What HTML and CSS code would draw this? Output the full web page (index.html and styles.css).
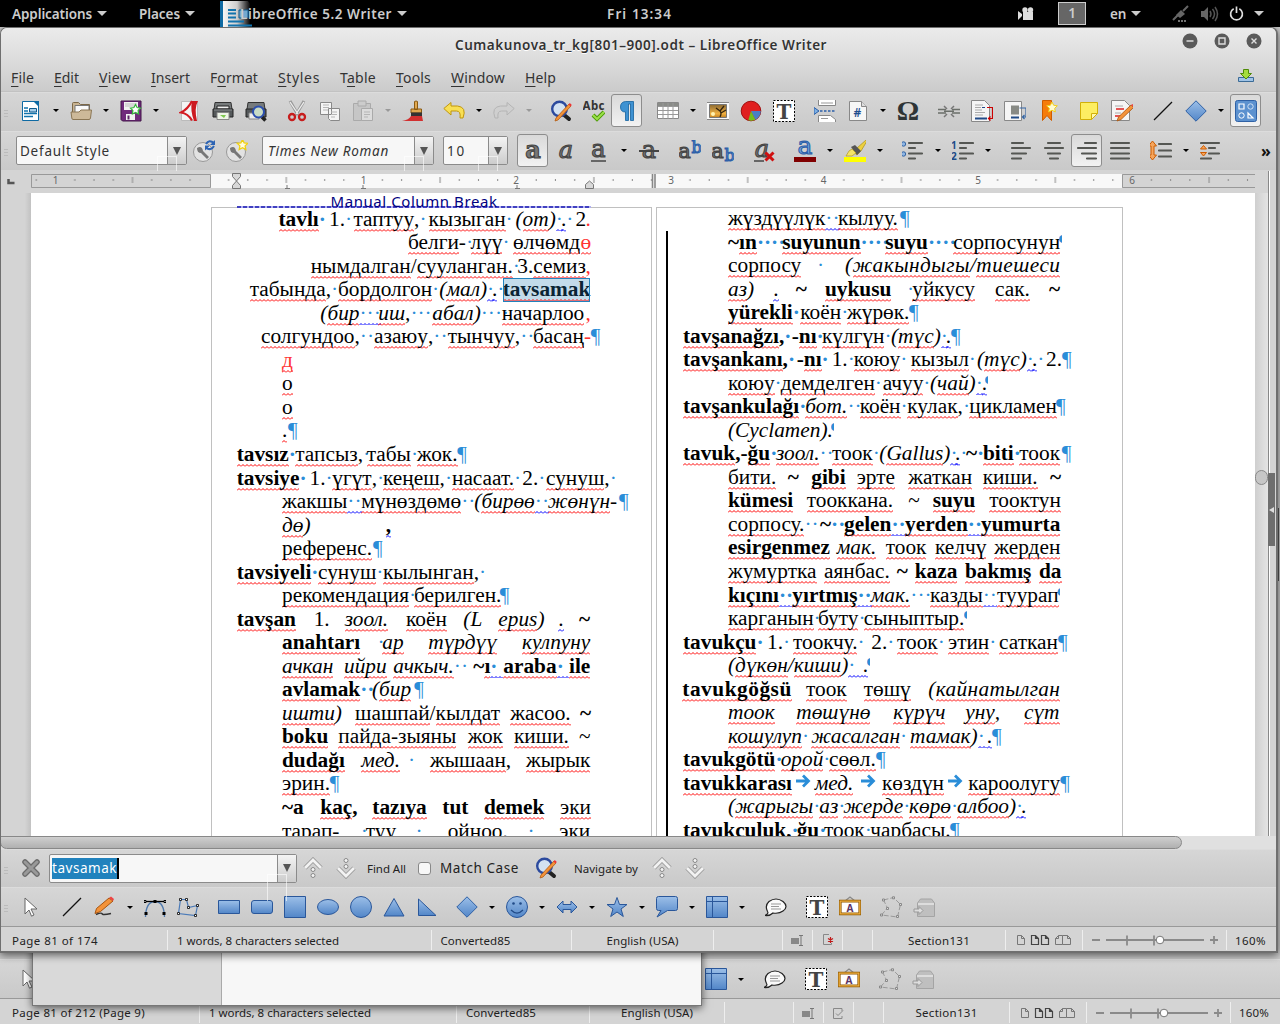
FILE: index.html
```html
<!DOCTYPE html>
<html lang="en">
<head>
<meta charset="utf-8">
<title>Cumakunova_tr_kg[801-900].odt - LibreOffice Writer</title>
<link rel="stylesheet" href="styles.css">
</head>
<body>
<svg class="defs" aria-hidden="true">
<defs>
<linearGradient id="gb" x1="0" y1="0" x2="0" y2="1"><stop offset="0" stop-color="#9cbfe8"/><stop offset="1" stop-color="#5286c8"/></linearGradient>
<linearGradient id="sun" x1="0" y1="0" x2="0" y2="1"><stop offset="0" stop-color="#8a6a34"/><stop offset=".7" stop-color="#f0b040"/><stop offset="1" stop-color="#c08020"/></linearGradient>
<linearGradient id="fade" x1="0" y1="0" x2="1" y2="0"><stop offset="0" stop-color="#fff"/><stop offset=".45" stop-color="#ccc"/><stop offset=".8" stop-color="#000"/></linearGradient>
</defs>
</svg>
<svg class="symbols" aria-hidden="true">
<symbol id="new" viewBox="0 0 22 22"><path d="M2.500 1.500h12l4 4v15h-16z" fill="#fff" stroke="#0f6aa3"/><path d="M13 1h6v6z" fill="#0f6aa3"/><path d="M4 8h4M4 11h4M4 13.500h13M4 16.500h9" stroke="#1173ad" stroke-width="1.500"/><path d="M9.500 8.500h7v3.500h-7z" fill="#a5cce8" stroke="#0f5a8c"/></symbol>
<symbol id="open" viewBox="0 0 22 22"><path d="M2.500 18V3.500q0-1 1-1h5l2 2h9v13z" fill="#c8b391" stroke="#7c6848"/><path d="M5 5.500h14v8H5z" fill="#fafafa" stroke="#777"/><path d="M1 12h8l2-2h10.500l-1 8q-.3 1.500-1.500 1.500H3q-1 0-1.200-1.500z" fill="#cdb999" stroke="#8b7654"/></symbol>
<symbol id="save" viewBox="0 0 22 22"><path d="M1 1h20v20H2.500L1 19.500z" fill="#702a7c" stroke="#421549"/><path d="M4 2h14v8H4zM6 14h9v6H6z" fill="#f2f2f2"/><path d="M5 4h12M5 6h12" stroke="#bbb"/><path d="M7.500 15.500h2v4h-2z" fill="#5a2264"/><path d="m15.500 4.500 1.600 3 3.400.6-2.400 2.400.5 3.500-3.100-1.600-3.100 1.600.5-3.500-2.400-2.400 3.400-.6z" fill="#fff" stroke="#36b83c" stroke-width="1.200"/></symbol>
<symbol id="pdf" viewBox="0 0 22 22"><path d="M2.500 1.500h16v19h-16z" fill="#f4f4f4" stroke="#bbb"/><path d="M13 1Q9 9 2 12.500q7 1 11 8" fill="none" stroke="#d31b22" stroke-width="2.200"/><path d="M13 1h6Q15 8 18 21h-3Q11 10 13 1z" fill="#cc1a20"/></symbol>
<symbol id="print" viewBox="0 0 22 22"><path d="M3 2.500h16l1 7H2z" fill="#777b7c" stroke="#333"/><path d="M5 6h12v3H5z" fill="#eee" stroke="#222"/><path d="M1 9h20v8H1z" fill="#55595b" stroke="#222"/><path d="M2 10h18" stroke="#8a8e90"/><path d="M5 12.500h12v7H5z" fill="#eef4e8" stroke="#888"/><path d="M8 15h6l-2 3z" fill="#7ec850"/></symbol>
<symbol id="preview" viewBox="0 0 22 22"><path d="M3 2.500h16l1 7H2z" fill="#777b7c" stroke="#333"/><path d="M1 9h20v8H1z" fill="#55595b" stroke="#222"/><path d="M4 13h10v6H4z" fill="#eee" stroke="#888"/><path d="m17 17 3.500 3.500" stroke="#222" stroke-width="3.500"/><circle cx="13.500" cy="12" r="5.500" fill="#c9dcc6" stroke="#2c4fae" stroke-width="2"/></symbol>
<symbol id="cut" viewBox="0 0 22 22"><path d="m4 1 8 14M18 1l-8 14" stroke="#999" stroke-width="3"/><path d="m4 2 8 12M18 2l-8 12" stroke="#eee" stroke-width="1.300"/><circle cx="6" cy="17" r="3" fill="none" stroke="#c71d1d" stroke-width="2.300"/><circle cx="16" cy="17" r="3" fill="none" stroke="#c71d1d" stroke-width="2.300"/></symbol>
<symbol id="copy" viewBox="0 0 22 22"><path d="M1.500 2.500h11v12h-11zM9.500 8.500h11v12h-9l-2-2z" fill="#f4f4f4" stroke="#888"/><path d="M4 5h6M4 7.500h6M4 10h5M12 12h6M12 14.500h6M12 17h4" stroke="#b5b5b5"/></symbol>
<symbol id="paste" viewBox="0 0 22 22"><path d="M1.500 3.500h17v17h-17z" fill="#c6c6c6" stroke="#aaa"/><path d="M6 1h8v5H6z" fill="#ccc" stroke="#aaa"/><path d="M9.500 8.500h11v12h-11z" fill="#dcdcdc" stroke="#aaa"/><path d="M12 12h6M12 14.500h6M12 17h4" stroke="#b5b5b5"/></symbol>
<symbol id="brush" viewBox="0 0 22 22"><path d="M12.500 1.500q1.500-1 3 0v8h-3zM9 9h10.500v4H9z" fill="#e0a850" stroke="#8a5a12"/><path d="M9 12.500h11v4H9z" fill="#333"/><path d="M9 16h11l1 5H0q7-1 9-5z" fill="#d23030"/></symbol>
<symbol id="undo" viewBox="0 0 22 22"><path d="M8 2.500.8 8.500 8 15v-4h5.500q4.500 0 3.500 7h3q4-11-5.500-12H8z" fill="#f8df55" stroke="#c0960c"/></symbol>
<symbol id="redo" viewBox="0 0 22 22"><path d="m14 2.500 7.200 6L14 15v-4H8.500Q4 11 5 18H2Q-2 7 7.500 6H14z" fill="#cfcfcf" stroke="#b4b4b4"/></symbol>
<symbol id="find" viewBox="0 0 22 22"><path d="m13 14 6 5" stroke="#222" stroke-width="4" stroke-linecap="round"/><circle cx="9.500" cy="9" r="7.300" fill="#d3e2f2" stroke="#2c4a9e" stroke-width="2.400"/><path d="m19 4 2 2L8 20l-3 1 1-3z" fill="#f3933a" stroke="#b15a12" stroke-width=".8"/><path d="m18.500 4.500 2 2 1.300-1.500-2-2z" fill="#e33"/></symbol>
<symbol id="abc" viewBox="0 0 22 22"><text x="-.5" y="9.500" font-family="Noto Sans" font-weight="700" font-size="11.500" textLength="22" fill="#333">Abc</text><path d="m10 15 4 4 7-7" fill="none" stroke="#4c9a06" stroke-width="4"/><path d="m10 15 4 4 7-7" fill="none" stroke="#9be04a" stroke-width="2"/></symbol>
<symbol id="pil" viewBox="0 0 22 22"><path d="M17.500 1.500H9.500Q4.500 2 4.500 7t5 5v8.500h3V4h2v16.500h3z" fill="#3f92d2" stroke="#15629e" stroke-width=".8"/></symbol>
<symbol id="table" viewBox="0 0 22 22"><path d="M.5 2.500h21v16H.5z" fill="#fff" stroke="#888"/><path d="M1 3h20v3H1z" fill="#8a8c88"/><path d="M1 6.500h20M1 10.500h20M1 14.500h20M6 3v16M11 3v16M16 3v16" stroke="#999"/></symbol>
<symbol id="image" viewBox="0 0 22 22"><path d="M-.5 2.500h23v17h-23z" fill="#fafafa" stroke="#888"/><path d="M2.500 4.500h17v13h-17z" fill="url(#sun)" stroke="#777"/><path d="M13 17q2-4 0-6l-4-3M13 11l4-5M14 13l5-3" stroke="#33230c" stroke-width="1.300" fill="none"/><circle cx="6" cy="14" r="2" fill="#fff2b0"/></symbol>
<symbol id="chart" viewBox="0 0 22 22"><circle cx="11" cy="11" r="9.800" fill="#e02020" stroke="#a00f0f"/><path d="M11 11h9.800a10 10 0 0 1-5.500 8.700z" fill="#4a7fc4"/><path d="m11 11 4.300 8.700a10 10 0 0 1-7 .6z" fill="#73bf1e"/></symbol>
<symbol id="tbox" viewBox="0 0 22 22"><path d="M.5.500h21v21H.5z" fill="#fff" stroke="#000" stroke-dasharray="2 1.500"/><text x="11" y="18.500" text-anchor="middle" font-family="DejaVu Serif" font-weight="700" font-size="20" fill="#444">T</text></symbol>
<symbol id="pbreak" viewBox="0 0 22 22"><path d="M4.500 0v5.500h17V0M4.500 22v-6.500h12l5 4V22" fill="#fff" stroke="#888"/><path d="M7 3h12M7 18.500h7" stroke="#999"/><path d="M6 11h17" stroke="#2b5fa8" stroke-width="1.500" stroke-dasharray="2.500 1.500"/><path d="m0 7.500 5 3.500-5 3.500z" fill="#7eb1e4" stroke="#2b5fa8"/></symbol>
<symbol id="field" viewBox="0 0 22 22"><path d="M2.500 1.500h12l5 5v14h-17z" fill="#f7f7f7" stroke="#888"/><path d="M14.500 1.500v5h5" fill="#ddd" stroke="#888"/><text x="10.500" y="17" text-anchor="middle" font-family="Noto Sans" font-weight="600" font-size="12" fill="#1f4e8f">#</text></symbol>
<symbol id="omega" viewBox="0 0 22 22"><text x="11" y="20" text-anchor="middle" font-family="Liberation Serif" font-weight="700" font-size="28" fill="#2e3436">Ω</text></symbol>
<symbol id="link" viewBox="0 0 22 22"><path d="M0 9.500h8M14 9.500h8M0 13h8M14 13h8M6 11.200h10" stroke="#6b6f6a" stroke-width="1.500" fill="none"/><path d="m6 6 3 3m7-3-3 3m-7 8 3-3m7 3-3-3" stroke="#777" stroke-width="1.500"/></symbol>
<symbol id="footn" viewBox="0 0 22 22"><path d="M.5.500h13l5 5v16H.5z" fill="#f5f5f5" stroke="#888"/><path d="M4 5h8M4 7.500h6M4 10h7M4 12.500h10M4 15h8" stroke="#aaa"/><path d="M11 7.500h3" stroke="#204a87"/><path d="M4 18.500h12" stroke="#204a87" stroke-width="2"/><path d="M16 7.500h5.500v11h-4m2-2-2 2 2 2" stroke="#c00" fill="none" stroke-width="1.200"/></symbol>
<symbol id="endn" viewBox="0 0 22 22"><path d="M.5 1.500h17v19H.5z" fill="#f5f5f5" stroke="#888"/><path d="M7 5.500h8v9H7z" fill="#888a85"/><path d="M7 17.500h8" stroke="#204a87" stroke-width="2"/><path d="M15.500 8h6.500v9h-3.500m2-2-2 2 2 2" stroke="#3465a4" fill="none" stroke-width="1.200"/></symbol>
<symbol id="bookm" viewBox="0 0 22 22"><path d="M5.500.500h9v20l-4.500-5-4.500 5z" fill="#f57c0c" stroke="#ce5c00"/><path d="m15 2 1.700 3.300 3.600.5-2.600 2.500.6 3.700-3.300-1.800-3.300 1.800.6-3.700-2.600-2.500 3.600-.5z" fill="#fffbd0" stroke="#f2cf1a"/></symbol>
<symbol id="note" viewBox="0 0 22 22"><path d="M2.500 2.500h17v11l-6 6h-11z" fill="#fdee62" stroke="#d1b008"/><path d="M13.500 19.500v-6h6z" fill="#fff8b0" stroke="#d1b008"/></symbol>
<symbol id="track" viewBox="0 0 22 22"><path d="M.5.500h13l5 5v15H.5z" fill="#f5f5f5" stroke="#888"/><path d="M4 6h8M4 13h6" stroke="#aaa"/><path d="M5 9h8M4 16h6" stroke="#d22" stroke-width="1.300"/><path d="m20 5 2.500 2.500L10 19.500l-4 1.500 1.500-4z" fill="#f3933a" stroke="#a8540e" stroke-width=".8"/><path d="m20 5 1.500-1 2 2-1 1.500z" fill="#e44"/></symbol>
<symbol id="line" viewBox="0 0 22 22"><path d="M2 20 20 2" stroke="#111" stroke-width="1.300"/></symbol>
<symbol id="diam" viewBox="0 0 22 22"><path d="M11 .8 21.200 11 11 21.200.800 11z" fill="url(#gb)" stroke="#2f61a5"/></symbol>
<symbol id="shapes" viewBox="0 0 22 22"><rect x=".5" y=".5" width="21" height="21" rx="2" fill="#5c91cf" stroke="#2f61a5"/><path d="M4 4h5v5H4zM13 18v-5l5 5z" fill="none" stroke="#fff" stroke-width="1.200"/><circle cx="15.500" cy="6.500" r="2.700" fill="none" stroke="#cfe0f4"/><circle cx="6.500" cy="15.500" r="2.700" fill="none" stroke="#fff"/></symbol>
<symbol id="wr1" viewBox="0 0 22 22"><circle cx="10" cy="12" r="9.500" fill="#e2e2e2" stroke="#999"/><path d="M4 8q5-3 6 3l6 6-2 2-6-6q-4 0-4-5l3 2z" fill="#777"/><path d="M13 4q3-5 8-1m0 3q-3 5-8 2" stroke="#2d64b4" stroke-width="2" fill="none"/><path d="m22 0v5h-5zM12 10.500v-5h5z" fill="#2d64b4"/></symbol>
<symbol id="wr2" viewBox="0 0 22 22"><circle cx="10" cy="12" r="9.500" fill="#e2e2e2" stroke="#999"/><path d="M4 8q5-3 6 3l6 6-2 2-6-6q-4 0-4-5l3 2z" fill="#777"/><path d="m16.500-.5 1.600 3.300 3.700.5-2.700 2.600.7 3.700-3.300-1.800-3.300 1.800.7-3.700-2.700-2.600 3.700-.5z" fill="#fffbe0" stroke="#f0d010" stroke-width="1.300"/></symbol>
<symbol id="fb" viewBox="0 0 22 22"><text x="11" y="17.500" class="a" font-weight="700">a</text></symbol>
<symbol id="fi" viewBox="0 0 22 22"><text x="11" y="17.500" class="a" font-style="italic">a</text></symbol>
<symbol id="fu" viewBox="0 0 22 22"><text x="10.500" y="17" class="a">a</text><path d="M3 21h15" stroke="#444" stroke-width="1.600"/></symbol>
<symbol id="fs" viewBox="0 0 22 22"><text x="11" y="17.500" class="a">a</text><path d="M1 11h20" stroke="#444" stroke-width="2"/></symbol>
<symbol id="sup" viewBox="0 0 22 22"><text x="5.500" y="17.500" class="a sm">a</text><text x="17.500" y="12.500" class="a bl">b</text></symbol>
<symbol id="sub" viewBox="0 0 22 22"><text x="5.500" y="17.500" class="a sm">a</text><text x="17.500" y="21" class="a bl">b</text></symbol>
<symbol id="clr" viewBox="0 0 22 22"><text x="9" y="17" class="a" font-style="italic">a</text><path d="M1 21h10" stroke="#444" stroke-width="1.600"/><path d="m12.500 12.500 8 8m0-8-8 8" stroke="#d01010" stroke-width="3"/></symbol>
<symbol id="fc" viewBox="0 0 22 22"><text x="11" y="14" class="a big">a</text><path d="M-1 17h24v6H-1z" fill="#800000"/></symbol>
<symbol id="hl" viewBox="0 0 22 22"><path d="m13 8 9-8 1 1-6 10-4 4-5-4z" fill="#edd040" stroke="#a89018" stroke-width=".7"/><path d="m7 7 4-2 6 6-4 4z" fill="#555"/><path d="m5 11 3-2 4 4-4 3H2z" fill="#f5e468" stroke="#b09a20" stroke-width=".7"/><path d="M-1 17h24v6H-1z" fill="#ff0"/></symbol>
<symbol id="bul" viewBox="0 0 22 22"><circle cx="1.500" cy="4" r="2.200" fill="#8db4e2" stroke="#3465a4"/><circle cx="1.500" cy="14" r="2.200" fill="#8db4e2" stroke="#3465a4"/><path d="M7 3h13M7 8h6M7 13.500h13M7 18.500h6" class="ln"/></symbol>
<symbol id="num" viewBox="0 0 22 22"><text x="-1" y="8.500" font-size="10" font-weight="700" font-family="Noto Sans" fill="#204a87">1</text><text x="-1" y="19.500" font-size="10" font-weight="700" font-family="Noto Sans" fill="#204a87">2</text><path d="M8 3h13M8 8h6M8 13.500h13M8 18.500h6" class="ln"/></symbol>
<symbol id="al" viewBox="0 0 22 22"><path d="M2 3h11M2 8h18M2 13.500h14M2 18.500h9" class="ln"/></symbol>
<symbol id="ac" viewBox="0 0 22 22"><path d="M5 3h12M2 8h18M5 13.500h12M7 18.500h8" class="ln"/></symbol>
<symbol id="ar" viewBox="0 0 22 22"><path d="M9 3h11M2 8h18M6 13.500h14M11 18.500h9" class="ln"/></symbol>
<symbol id="aj" viewBox="0 0 22 22"><path d="M2 3h18M2 8h18M2 13.500h18M2 18.500h18" class="ln"/></symbol>
<symbol id="lsp" viewBox="0 0 22 22"><path d="m2.500 1 4 5H4v9h2.500l-4 5-4-5H1V6h-2.500z" fill="#f5a55c" stroke="#ce5c00"/><path d="M9 4h12M9 10.500h12M9 16.500h12" class="ln"/></symbol>
<symbol id="psp" viewBox="0 0 22 22"><path d="M1 3h18M9 8h6M9 13.500h10M1 18.500h10" class="ln"/><path d="m3.500 5.500 3 3.500h-6zM3.500 16l3-3.500h-6z" fill="#f5a55c" stroke="#ce5c00"/></symbol>
<symbol id="ptr" viewBox="0 0 22 22"><path d="m5 2 12 11h-6l3 6-2.500 1.200L9 14l-4 4z" fill="#fff" stroke="#666"/></symbol>
<symbol id="pen" viewBox="0 0 22 22"><path d="M2 18.500q5-2 6-1 0 2 9 0" stroke="#333" fill="none" stroke-width="1.500"/><path d="m15 2 4 3L6.500 15.500 1 17.500l1.500-5z" fill="#f3933a" stroke="#a8540e"/><path d="m15 2 2-1.500L20 3l-1 2z" fill="#e44"/></symbol>
<symbol id="curve" viewBox="0 0 22 22"><path d="M1.500 21Q2 5.500 11 5.500T20.500 21" fill="none" stroke="#4e79ad" stroke-width="1.300"/><path d="M1 5.500h20" stroke="#000" stroke-width="1.300"/><path d="M0 4.500h2v2H0zM20 4.500h2v2h-2z" fill="#fff" stroke="#000"/><path d="M9.500 4h3v3h-3zM.5 16h3v3h-3zM18.500 16h3v3h-3z"/></symbol>
<symbol id="poly" viewBox="0 0 22 22"><path d="M3.500 3.500h6l2 8 9-2-2 10-17-2z" fill="none" stroke="#4a7ab8" stroke-width="1.200"/><path d="M2.500 2.500h2v2h-2zM8.500 2.500h2v2h-2zM10.500 10.500h2v2h-2zM19.500 8.500h2v2h-2zM17.500 18.500h2v2h-2zM.5 16.500h2v2h-2z" fill="#fff" stroke="#000" stroke-width=".8"/></symbol>
<symbol id="rect" viewBox="0 0 22 22"><path d="M.5 4.500h21v13H.5z" fill="url(#gb)" stroke="#2a579a"/></symbol>
<symbol id="rrect" viewBox="0 0 22 22"><rect x=".5" y="4.500" width="21" height="13" rx="2.500" fill="url(#gb)" stroke="#2a579a"/></symbol>
<symbol id="sq" viewBox="0 0 22 22"><path d="M.5.500h21v21H.5z" fill="url(#gb)" stroke="#2a579a"/></symbol>
<symbol id="ell" viewBox="0 0 22 22"><ellipse cx="11" cy="11" rx="10.500" ry="7.500" fill="url(#gb)" stroke="#2a579a"/></symbol>
<symbol id="circ" viewBox="0 0 22 22"><circle cx="11" cy="11" r="10.500" fill="url(#gb)" stroke="#2a579a"/></symbol>
<symbol id="tri" viewBox="0 0 22 22"><path d="m11 2.500 10 17.500H1z" fill="url(#gb)" stroke="#2a579a"/></symbol>
<symbol id="rtri" viewBox="0 0 22 22"><path d="M2.500 3 20 19.500H2.500z" fill="url(#gb)" stroke="#2a579a"/></symbol>
<symbol id="smile" viewBox="0 0 22 22"><circle cx="11" cy="11" r="10.500" fill="url(#gb)" stroke="#2a579a"/><circle cx="7.500" cy="7.500" r="1.300" fill="#204a87"/><circle cx="14.500" cy="7.500" r="1.300" fill="#204a87"/><path d="M5 14q6 6 12 0" fill="none" stroke="#204a87" stroke-width="1.200"/></symbol>
<symbol id="darr" viewBox="0 0 22 22"><path d="m1 11 6-6v3.500h8V5l6 6-6 6v-3.500H7V17z" fill="url(#gb)" stroke="#2a579a"/></symbol>
<symbol id="star" viewBox="0 0 22 22"><path d="m11 1.500 2.500 7h7.500l-6 4.500 2.300 7.500L11 16l-6.300 4.500L7 13 1 8.500h7.500z" fill="url(#gb)" stroke="#2a579a"/></symbol>
<symbol id="call" viewBox="0 0 22 22"><path d="M2.500.500h17q2 0 2 2v10q0 2-2 2h-8L1 21l4-6.500H2.500q-2 0-2-2v-10q0-2 2-2z" fill="url(#gb)" stroke="#2a579a"/></symbol>
<symbol id="flow" viewBox="0 0 22 22"><path d="M.5.500h21v21H.5zM6.500.500v21M.5 5.500h21" fill="url(#gb)" stroke="#2a579a"/></symbol>
<symbol id="comm" viewBox="0 0 22 22"><path d="M0 19.500q4-2 2.500-4-3-6 1.500-10 7-5 14 0 6 5 0 9.500-4 3-10 2-3 3-8 2.500z" fill="#fafafa" stroke="#222" stroke-width="1.200"/><path d="M6 8h10M6 10.500h8M6 13h10" stroke="#999"/></symbol>
<symbol id="fw" viewBox="0 0 22 22"><path d="m6 5 5-4 5 4" fill="none" stroke="#888" stroke-width="1.200"/><path d="M1.200 5.200h19.600v12.600H1.200z" fill="#fff" stroke="#8f5902" stroke-width="2.800"/><path d="M1.200 5.200h19.600v12.600H1.200z" fill="none" stroke="#f0b040" stroke-width="1.200"/><text x="11" y="15.500" text-anchor="middle" font-family="Noto Sans" font-weight="700" font-size="10" fill="#5c3566">A</text></symbol>
<symbol id="pts" viewBox="0 0 22 22"><path d="m3.500 4 10-2.500 7 7-3 12.500-16-2 6-7z" fill="none" stroke="#999" stroke-dasharray="5 2"/><path d="M2.500 3h2v2h-2zM12.500.800h2v2h-2zM19.500 7.500h2v2h-2zM6.500 11.500h2v2h-2zM.5 18h2v2h-2zM16.500 19.500h2v2h-2z" fill="#ddd" stroke="#888"/></symbol>
<symbol id="extr" viewBox="0 0 22 22"><path d="m4.500 7 3-4h11l3 4v13.500h-17z" fill="#bfbfbf" stroke="#a4a4a4"/><path d="M5 8h16" stroke="#ddd" stroke-width="2"/><path d="M1 13h5v-2.500l4 4-4 4V16H1z" fill="#ddd" stroke="#999"/></symbol>
<symbol id="close" viewBox="0 0 22 22"><path d="m5 5 12 12m0-12L5 17" stroke="#6b6b6b" stroke-width="5.500" stroke-linecap="round"/><path d="m5 5 12 12m0-12L5 17" stroke="#999" stroke-width="3" stroke-linecap="round"/></symbol>
<symbol id="up" viewBox="0 0 22 22"><path d="m2 11 8-8 8 8" fill="none" stroke="#999" stroke-width="4.500"/><path d="m2 11 8-8 8 8" fill="none" stroke="#f2f2f2" stroke-width="2.800"/><circle cx="10" cy="12.500" r="2" fill="#f4f4f4" stroke="#888"/><circle cx="10" cy="18.500" r="2" fill="#f4f4f4" stroke="#888"/></symbol>
<symbol id="down" viewBox="0 0 22 22"><path d="m2 11 8 8 8-8" fill="none" stroke="#999" stroke-width="4.500"/><path d="m2 11 8 8 8-8" fill="none" stroke="#f2f2f2" stroke-width="2.800"/><circle cx="10" cy="9.500" r="2" fill="#f4f4f4" stroke="#888"/><circle cx="10" cy="3.500" r="2" fill="#f4f4f4" stroke="#888"/></symbol>
<symbol id="views" viewBox="0 0 56 12"><g fill="none"><path d="M1.500 1.500h4l3 3v6h-7zM5.500 1.500v3h3" stroke="#777"/><path d="M15.500 1.500h4l3 3v6h-7zM19.500 1.500v3h3M25.500 1.500h4l3 3v6h-7zM29.500 1.500v3h3" stroke="#444" stroke-width="1.200"/><path d="m39.500 4.500 3-3h4v9h-7zM42.500 1.500v3h-3M46.500 1.500h5l3 3v6h-8M51.500 1.500v3h3" stroke="#777"/></g></symbol>
<symbol id="zoomer" viewBox="0 0 128 14"><path d="M0 7h8M14 7h98M118 7h8M122 3v8M35 2.500v10M62 2.500v10" stroke="#8a8a8a" stroke-width="1.800"/><circle cx="68" cy="7" r="3.800" fill="#fff" stroke="#777"/></symbol>
<symbol id="ins" viewBox="0 0 14 12"><path d="M0 4h8v6H0z" fill="#888"/><path d="M8 1.500h4M8 11.500h4M10 1.500v10" stroke="#777"/></symbol>
<symbol id="mod" viewBox="0 0 14 12"><path d="M8 .5H2.500v10h8V9" fill="none" stroke="#888"/><path d="M9.500 3v6M7 4.500l5 3M12 4.500l-5 3" stroke="#c01818" stroke-width="1.200"/></symbol>
<symbol id="ok" viewBox="0 0 14 12"><path d="M10 4V1.500H1.500v10H10V9M4 6.500l2 2 5-5" fill="none" stroke="#888"/></symbol>
</svg>

<header class="panel">
  <b class="p-app" data-w="80">Applications</b><i class="tri"></i>
  <b class="p-pl" data-w="41">Places</b><i class="tri"></i>
  <div class="p-task"><svg class="task-ic" viewBox="0 0 38 26"><path d="M0 0h28l10 14v12H0z" fill="url(#fade)"/><path d="M0 0h3v26H0z" fill="#0f6aa3"/><path d="M8 9h8M8 12.500h8M8 16.500h8M8 20.500h16M8 24.500h24" stroke="#1173ad" stroke-width="2"/><path d="M19 9h9v8h-9z" fill="#74a9cf" stroke="#0f5a8c"/></svg><b data-w="152">LibreOffice 5.2 Writer</b></div><i class="tri"></i>
  <b class="p-clock" data-w="65">Fri 13:34</b>
  <svg class="p-cam" viewBox="0 0 16 13"><path d="M5 5h10v8H5zM0 4l4 3v2l-4 4z" fill="#ddd"/><circle cx="7" cy="3" r="2.700" fill="#ddd"/><circle cx="12.500" cy="3" r="2.700" fill="#ddd"/></svg>
  <b class="p-ws">1</b><b class="p-en" data-w="16">en</b><i class="tri"></i>
  <svg class="p-net" viewBox="0 0 16 16"><path d="m0 14 5-5M10 5l5-5" stroke="#666" stroke-width="2"/><path d="m3 9 5-5 4 4-5 4z" fill="#666"/><path d="M5 15h8" stroke="#999" stroke-width="1.500" stroke-dasharray="2 1"/></svg>
  <svg class="p-vol" viewBox="0 0 17 16"><path d="M0 5h3l4-4v14l-4-4H0z" fill="#666"/><path d="M9 5q2 3 0 6M11.500 3q4 5 0 10M14 1q5 7 0 14" stroke="#555" fill="none" stroke-width="1.500"/></svg>
  <svg class="p-pow" viewBox="0 0 16 16"><path d="M5 2.500a6.300 6.300 0 1 0 6 0M8 0v7" stroke="#ddd" stroke-width="1.800" fill="none"/></svg><i class="tri"></i>
</header>

<section class="back">
  <div class="tb bbar" data-icons="ptr"></div>
  <div class="tb bbar b2" data-icons="flow+ |9 comm |8 tbox fw |8 pts extr"></div>
  <footer class="status s2"><span><em data-w="133">Page 81 of 212 (Page 9)</em></span><span><em data-w="162">1 words, 8 characters selected</em></span><span><em data-w="70">Converted85</em></span><span><em data-w="72">English (USA)</em></span><span></span><span><svg><use href="#ins"/></svg></span><span><svg><use href="#ok"/></svg></span><span></span><span><em data-w="62">Section131</em></span><span><svg class="w56"><use href="#views"/></svg></span><span><svg class="w128"><use href="#zoomer"/></svg></span><span><em data-w="30">160%</em></span></footer>
  <i class="grip2"></i>
</section>
<section class="sheet"><div></div></section>

<main class="win">
  <div class="title"><b data-w="372">Cumakunova_tr_kg[801–900].odt – LibreOffice Writer</b>
    <svg class="wbtn" viewBox="0 0 80 16"><g fill="#5a5a5a"><circle cx="8" cy="8" r="7.500"/><circle cx="40" cy="8" r="7.500"/><circle cx="72" cy="8" r="7.500"/></g><path d="M4.500 8h7M37 5h6v6h-6zM69.500 5.500l5 5m0-5-5 5" stroke="#ddd" stroke-width="1.400" fill="none"/></svg></div>
  <nav class="menu"><a data-w="23"><u>F</u>ile</a><a data-w="25"><u>E</u>dit</a><a data-w="32"><u>V</u>iew</a><a data-w="39"><u>I</u>nsert</a><a data-w="48">F<u>o</u>rmat</a><a data-w="42"><u>S</u>tyles</a><a data-w="36">T<u>a</u>ble</a><a data-w="35"><u>T</u>ools</a><a data-w="54"><u>W</u>indow</a><a data-w="31"><u>H</u>elp</a>
    <svg viewBox="0 0 16 14"><path d="M.5 8.500h15v4H.5z" fill="#9fc3e6" stroke="#3b6b96"/><path d="M5.500.500h5v4h3L8 10 2.500 4.500h3z" fill="#a5dd3c" stroke="#4e8a06"/></svg></nav>
  <div class="tb std" data-icons="new+ open+ save+ |9 pdf print preview |8 cut copy paste- brush |8 undo+ redo- |7 find abc pil! |8 table+ image chart tbox |8 pbreak field+ omega |8 link footn endn bookm |8 note track |8 line diam+ shapes!"></div>
  <div class="tb fmt"><div class="combo c1"><span data-w="90">Default Style</span><i></i></div><div class="tb in" data-icons="wr1 wr2"></div><div class="combo c2"><span data-w="121">Times New Roman</span><i></i></div><div class="combo c3"><span data-w="19">10</span><i></i></div><div class="tb in g" data-icons="fb! fi fu+ fs |8 sup sub |8 clr |8 fc+ hl+ |8 bul+ num+ |8 al ac ar! aj |8 lsp+ psp"></div><b class="more">»</b></div>
  <div class="ruler"><svg viewBox="0 0 1277 24"><defs><pattern id="tk" x="55.600" y="0" width="153.800" height="24" patternUnits="userSpaceOnUse"><path d="M19.200 9v2M38.400 9v2M57.700 9v2M96.100 9v2M115.300 9v2M134.500 9v2M76.900 7v6" stroke="#888"/></pattern></defs><path d="M8.500 9v4h6" fill="none" stroke="#555" stroke-width="2.500"/><path d="M31.500 4.500h179v13h-179zM1122.500 4.500H1260v13h-137.500z" fill="#d4d4d4" stroke="#999"/><path d="M211 4h911v14H211z" fill="#f8f8f8"/><path d="M32 5h1223v12H32z" fill="url(#tk)"/><path d="M287 15v3m-2 .5h5M363 15v3m-2 .5h5M517 15v3m-2 .5h5" stroke="#777"/><g class="rn"><text x="55.500" y="14">1</text><text x="363.500" y="14">1</text><text x="516" y="14">2</text><text x="671" y="14">3</text><text x="823.500" y="14">4</text><text x="978" y="14">5</text><text x="1132" y="14">6</text></g><path d="M232.500 3.500h8v3l-4 4.500-4-4.500zM232.500 18.500h8v-3L236.500 11l-4 4.500zM585.500 18.500h8v-4L589.500 11l-4 3.500z" fill="#d8d8d8" stroke="#777"/><path d="M652.500 4v14M655 4v14" stroke="#888" stroke-width="1.600"/><path d="M1255 0h22v24h-22z" fill="#d5d5d5"/></svg></div>
  <div class="work">
    <div class="gutter"></div>
    <div class="canvas">
      <div class="cbreak"><span data-w="167">Manual Column Break</span></div>
      <div class="col c-left" id="left"></div>
      <div class="col c-right" id="right"></div>
      <div class="rule"></div>
    </div>
    <div class="vs"><i></i></div>
    <div class="side"><i></i></div>
  </div>
  <div class="hs"><i></i></div>
  <div class="tb findbar"><div class="tb in" data-icons="close"></div><div class="combo c4"><span><mark data-w="65">tavsamak</mark></span><i></i></div><div class="tb in" data-icons="up down"></div><em class="fa" data-w="39">Find All</em><i class="chk"></i><em class="mc" data-w="79">Match Case</em><div class="tb in f2" data-icons="find"></div><em class="nb" data-w="64">Navigate by</em><div class="tb in f3" data-icons="up down"></div></div>
  <div class="tb draw" data-icons="ptr |8 line pen+ curve poly |8 rect rrect sq ell circ tri rtri |7 diam+ smile+ darr+ star+ call+ flow+ |9 comm |8 tbox fw |8 pts extr"></div>
  <footer class="status"><span><em data-w="86">Page 81 of 174</em></span><span><em data-w="162">1 words, 8 characters selected</em></span><span><em data-w="70">Converted85</em></span><span><em data-w="72">English (USA)</em></span><span></span><span><svg><use href="#ins"/></svg></span><span><svg><use href="#mod"/></svg></span><span></span><span><em data-w="62">Section131</em></span><span><svg class="w56"><use href="#views"/></svg></span><span><svg class="w128"><use href="#zoomer"/></svg></span><span><em data-w="31">160%</em></span></footer>
</main>
<script src="app.js"></script>
</body>
</html>
```
FILE: styles.css
```css
* { box-sizing: border-box; }
body { margin: 0; width: 1280px; height: 1024px; overflow: hidden; position: relative; background: #cfcfcf; font: 13px "Noto Sans", "Open Sans", sans-serif; color: #333; }
i, em { font-style: normal; }
svg { display: block; flex: none; overflow: visible; }
.defs { position: absolute; width: 0; height: 0; }
.symbols { display: none; }
.a { font-family: "DejaVu Serif", serif; font-size: 24px; text-anchor: middle; fill: #777; stroke: #444; stroke-width: 1.1px; }
.sm { font-size: 21px; }
.bl { fill: #7aaae0; stroke: #2c5fa8; font-size: 16px; }
.big { fill: #7aaae0; stroke: #2c5fa8; font-size: 25px; }
.ln { stroke: #555753; stroke-width: 2.2; stroke-linecap: round; }
[data-w] { white-space: pre; }

.panel { height: 27px; background: #000; color: #ccc; display: flex; align-items: center; position: relative; z-index: 3; padding-left: 12px; font-size: 13.500px; }
.panel b { font-weight: 600; flex: none; }
.tri { flex: none; width: 0; border: 5px solid transparent; border-top: 5px solid #ccc; border-bottom: 0; margin-left: 5px; }
.p-pl { margin-left: 32px; }
.p-task { display: flex; align-items: center; margin-left: 25px; }
.task-ic { width: 38px; height: 26px; margin-right: -18px; }
.p-clock { margin-left: 200px; }
.p-cam { width: 16px; height: 13px; margin-left: 346px; }
.p-ws { width: 28px; height: 23px; border: 1px solid #ccc; background: #666; text-align: center; line-height: 21px; margin-left: 24px; }
.p-en { margin-left: 24px; }
.p-net { width: 16px; height: 16px; margin-left: 32px; }
.p-vol { width: 17px; height: 16px; margin-left: 12px; }
.p-pow { width: 15px; height: 16px; margin-left: 11px; }
.panel .p-pow + .tri { margin-left: 10px; }

.win { position: absolute; left: 0; top: 27px; width: 1278px; height: 926px; border: 1px solid #6f6f6f; border-width: 1px 2px 2px 1px; border-radius: 7px 7px 0 0; background: #d4d4d4; display: flex; flex-direction: column; box-shadow: 0 2px 9px rgba(0,0,0,.6); overflow: hidden; }
.win > * { margin-left: -1px; flex: none; }
.title { height: 38px; background: linear-gradient(#ebebeb, #d9d9d9); display: flex; align-items: center; padding-left: 455px; color: #333; position: relative; font-size: 13.500px; }
.title b { font-weight: 600; text-shadow: 0 1px #fff; padding-bottom: 4px; }
.wbtn { width: 80px; height: 16px; margin: -13px 0 0 355px; }
.menu { height: 26px; background: linear-gradient(#d9d9d9, #cbcbcb); display: flex; align-items: flex-start; padding-left: 11px; font-size: 14px; line-height: 23px; gap: 20px; border-bottom: 1px solid #c2c2c2; }
.menu u { text-underline-offset: 3px; text-decoration-thickness: 1px; }
.menu svg { width: 16px; height: 14px; margin: 3px 0 0 662px; }
.tb { height: 39px; display: flex; align-items: center; background: linear-gradient(#d6d6d6, #c9c9c9); padding-left: 14px; }
.win > .std { padding-bottom: 3px; }
.tb .btn { width: 33px; height: 33px; display: flex; align-items: center; justify-content: center; flex: none; }
.tb .btn svg { width: 22px; height: 22px; }
.tb .on { width: 31px; margin: 0 1px; border: 1px solid #8d8d8d; border-radius: 3px; background: linear-gradient(#d9d9d9, #f2f2f2); }
.drop { width: 17px; flex: none; display: flex; justify-content: center; }
.drop::after { content: ""; border: 3px solid transparent; border-top-color: #000; border-bottom: 0; }
.drop.off::after { border-top-color: #999; }
.tb.in { background: none; padding: 0; height: 33px; }
.win > .tb:not(.status) { border-top: 1px solid #dcdcdc; background-image: linear-gradient(#bbb, #bbb), linear-gradient(#bbb, #bbb), linear-gradient(#bbb, #bbb), linear-gradient(#d6d6d6, #c9c9c9); background-size: 4px 1px, 4px 1px, 4px 1px, auto; background-position: 4px 17px, 4px 20px, 4px 23px, 0 0; background-repeat: no-repeat; }
.combo { position: relative; height: 29px; border: 1px solid #8b8b8b; border-radius: 2px; background: #f7f7f7; display: flex; flex: none; justify-content: space-between; align-items: center; font-size: 13.500px; padding-left: 3px; }
.combo i { width: 19px; height: 27px; border-left: 1px solid #8b8b8b; background: linear-gradient(#f4f4f4, #ccc); display: flex; align-items: center; justify-content: center; }
.combo i::after { content: ""; border: 4px solid transparent; border-top: 8px solid #555; border-bottom: 0; }
.combo::after { content: ""; position: absolute; right: 9px; top: 19px; width: 18px; height: 14px; border: 1px solid rgba(255,255,255,.6); border-bottom: 0; }
.c4::after { height: 26px; }
.win > .fmt { padding: 0 0 1px 16px; }
.c1 { width: 171px; }
.c2 { width: 172px; margin-left: 9px; font-style: italic; padding-left: 5px; }
.c3 { width: 65px; margin-left: 9px; }
.g { margin-left: 8px; }
.more { margin-left: 34px; color: #111; font-size: 16px; }

.ruler { height: 23px; background: #d4d4d4; overflow: hidden; }
.ruler svg { width: 1277px; height: 24px; }
.rn { font-size: 10px; fill: #666; text-anchor: middle; }
.work { height: 643px; display: flex; }
.work > * { flex: none; }
.gutter { width: 31px; background: linear-gradient(90deg, #d4d4d4 80%, #c2c2c2); }
.canvas { width: 1224px; background: #fff; position: relative; display: grid; grid-template-columns: 180px 441px 4px 467px 1fr; grid-template-rows: 14px 629px; overflow: hidden; }
.cbreak { grid-column: 2; grid-row: 1; margin: 0 61px 0 26px; text-align: center; color: #000080; font-size: 15px; line-height: 17px; z-index: 1; height: 15px; background: repeating-linear-gradient(90deg, #4040c0 0 4px, #b0b0f0 4px 6px) 0 100% / 100% 2px no-repeat; }
.col { grid-row: 2; border: 1px solid #c0c0c0; border-bottom: 0; font: 21.330px "Liberation Serif", serif; color: #000; overflow: visible; min-width: 0; }
.c-left { grid-column: 2; }
.c-right { grid-column: 4; }
.c-left .row:first-child { margin-top: -.3px; }
.c-right .row:first-child { margin-top: -1px; }
.rule { position: absolute; left: 635px; top: 38px; width: 2px; height: 610px; background: #000; }
.row { display: flex; height: 23.540px; line-height: 23.540px; white-space: pre; }
.w { display: flex; flex: none; }
.gap { flex: 1; color: #2a8dd8; display: flex; justify-content: flex-start; font-style: normal; }
.gap.gr { background: url("data:image/svg+xml,%3Csvg xmlns='http://www.w3.org/2000/svg' width='4' height='3'%3E%3Cpath d='M0 2.500L2 .5L4 2.500' fill='none' stroke='%2300f' stroke-width='1'/%3E%3C/svg%3E") repeat-x 0 21px; }
.sq { background: url("data:image/svg+xml,%3Csvg xmlns='http://www.w3.org/2000/svg' width='4' height='3'%3E%3Cpath d='M0 2.500L2 .5L4 2.500' fill='none' stroke='%23f00' stroke-width='1'/%3E%3C/svg%3E") repeat-x 0 21px; display: inline-block; height: 24px; }
.sq.blu { background-image: url("data:image/svg+xml,%3Csvg xmlns='http://www.w3.org/2000/svg' width='4' height='3'%3E%3Cpath d='M0 2.500L2 .5L4 2.500' fill='none' stroke='%2300f' stroke-width='1'/%3E%3C/svg%3E"); }
.bo { font-weight: 700; }
.it { font-style: italic; }
.rd { color: #f33; }
.mk { color: #2a8dd8; font-style: normal; }
.cut { width: 3px; overflow: hidden; }
.selw { background: #c3dbea; outline: 1px solid #2182bd; outline-offset: -1px; color: #0b2434; }
.vs { width: 13px; background: linear-gradient(90deg, #cfcfcf, #e4e4e4); padding-top: 277px; }
.vs i { display: block; width: 13px; height: 15px; border: 1px solid #888; border-radius: 7px; background: #c6c6c6; }
.side { width: 9px; border-left: 1px solid #888; background: linear-gradient(90deg, #fff 1px, #d4d4d4 1px); margin-top: -22px; padding-top: 302px; }
.side i { display: flex; align-items: center; justify-content: center; width: 7px; height: 73px; background: #6e6e6e; margin-left: -1px; }
.side i::after { content: ""; border: 3px solid transparent; border-right: 5px solid #ddd; border-left: 0; }
.hs { height: 13px; background: #e0e0e0; }
.hs i { display: block; width: 1182px; height: 13px; border: 1px solid #888; border-radius: 0 7px 7px 7px; background: linear-gradient(#cfcfcf, #b0b0b0); }
.win > .findbar { height: 38px; padding-bottom: 1px; }
.c4 { width: 248px; margin-left: 2px; padding-left: 2px; }
.c4 mark { background: #2182bd; color: #fff; display: inline-block; height: 21px; line-height: 20px; box-shadow: 2px 0 #000; }
.findbar em, .status em { font-size: 11.500px; color: #222; flex: none; }
.findbar .mc { font-size: 13.500px; margin-left: 9px; }
.fa { margin-left: 4px; }
.chk { width: 13px; height: 13px; margin-left: 12px; border: 1px solid #888; border-radius: 3px; background: #f7f7f7; }
.f2 { margin-left: 10px; }
.nb { margin-left: 12px; }
.f3 { margin-left: 8px; }
.status { height: 25px; border-top: 1px solid #999; background: #d4d4d4; display: grid; grid-template-columns: 168px 264px 140px 142px 69px 30px 30px 30px 133px 77px 144px 1fr; }
.status span { display: flex; align-items: center; justify-content: center; border-right: 1px solid #eee; margin: 3px 0 1px; min-width: 0; }
.status span:last-child { border: 0; padding-right: 2px; }
.status span:nth-child(-n+2) { justify-content: flex-start; padding-left: 9px; }
.status span:first-child { padding-left: 12px; }
.status span:nth-child(3) { padding-right: 52px; }
.status svg { width: 14px; height: 12px; }
.status .w56 { width: 56px; }
.status .w128 { width: 128px; height: 14px; margin-left: 2px; }

.back { position: absolute; left: 0; top: 27px; width: 1280px; height: 997px; background: #cacaca; display: grid; grid-template: 932px 39px 26px / 702px 1fr; }
.bbar { grid-row: 2; grid-column: 1; padding-left: 12.500px; border-top: 1px solid #dedede; }
.b2 { grid-column: 2; padding-left: 0; margin-left: -3px; }
.s2 { grid-row: 3; grid-column: 1 / 3; grid-template-columns: 200px 257px 133px 135px 69px 30px 30px 30px 126px 77px 144px 1fr; height: 26px; }
.status.s2 span:nth-child(3) { padding-right: 44px; }
.status.s2 span:last-child { justify-content: flex-start; padding-left: 8px; }
.grip2 { position: absolute; right: 1px; top: 481px; width: 3px; height: 73px; background: #555; }
.sheet { position: absolute; left: 32px; top: 940px; width: 670px; height: 66px; background: #d9d9d9; border: 1px solid #777; box-shadow: 0 2px 8px rgba(0,0,0,.6); display: flex; padding-left: 188px; }
.sheet div { flex: 1; background: #f7f7f7; border-left: 1px solid #aaa; }
```
FILE: app.js
```javascript
// Toolbars: "name" button, "+" drop-down, "-" disabled drop-down, "!" pressed, "|n" separator
document.querySelectorAll('[data-icons]').forEach(bar => {
  bar.innerHTML = bar.dataset.icons.split(' ').map(t => {
    if (t[0] === '|') return `<i style="width:${t.slice(1)}px"></i>`;
    const name = t.replace(/[+!-]$/, ''), f = t.slice(name.length);
    return `<i class="btn${f === '!' ? ' on' : ''}"><svg><use href="#${name}"/></svg></i>` +
      (f === '+' ? '<i class="drop"></i>' : f === '-' ? '<i class="drop off"></i>' : '');
  }).join('');
});

// Document lines: x:style:text:dots:width
// b bold, i italic, r red, s selected, n unchecked, m formatting mark, c clipped mark, g grammar
const left = `278.5:b:tavlı:1;329::1.:1;353.5::таптуу,:1;428.5::кызыган:1;515.5:i:(от):1g;561:g:.:1;575.5::2;585.5:r:.
408::белги-:1;470.5::лүү:1;513::өлчөмд;580.5:r:ө
310.7::нымдалган/сууланган.:1;517.3::3.семиз;585.5:r:,
249.7::табында,:1;338::бордолгон:1;439.3:i:(мал):1g;492:g:.:1;502.7:bs:tavsamak
320.3:i:(бир:3g;378.3:i:иш,:4;432.3:i:абал):4;501.7::начарлоо;585.5:r:,
261::солгундоо,:2;374::азаюу,:2;447.7::тынчуу,:2;533::басаң;584:r:-;590.7:m:¶
282:r:д
282::о
282::о
282:u:.;288:m:¶
236.7:b:tavsız:1;295.3::тапсыз,:1;366.7::табы:1;417::жок.;457.3:m:¶
236.7:b:tavsiye:1;309.5::1.:1;332.3::үгүт,:1;383::кеңеш,:1;452::насаат.:1;522.3::2.:1;546::сунуш,:1;614::
282::жакшы:2g;361.3::мүнөздөмө:2;474.3:i:(бирөө:2g;547.7:i:жөнүн-;619:m:¶
282:i:дө);385.7:bg:,
282::референс.;373:m:¶
236.7:b:tavsiyeli:1;318::сунуш:1;383::кылынган,:1;483::
282::рекомендация:1;414::берилген.;499.7:m:¶
236.7:b:tavşan;313.7::1.;344.7:i:зоол.;406::коён;463.3:in:(L;498.3:i:epus);558.3:g:.;579:b:~
282:b:anahtarı;377.5:m:·;382.3:i:ар;428.3:i:түрдүү;522:i:кулпуну
282:i:ачкан;344:i:ийри;393.3:i:ачкыч.:2;473.3:b:~ı:1g;503.3:b:araba:1g;569:b:ile
282:b:avlamak:2;372:i:(бир;414.3:m:¶
282:i:ишти);355::шашпай/кылдат;510.3::жасоо.;580:b:~
282:b:boku;338.3::пайда-зыяны;467.7::жок;514::киши.;579::~
282:b:dudağı;361.3:i:мед.;408:m:·;430::жышаан,;526::жырык
282::эрин.;329.7:m:¶
282:bn:~a;320.3:b:kaç,;372.3:b:tazıya;442.3:bn:tut;484:b:demek;560::эки
282::тарап-;360.7:m:·;365.7::туу;415.5:m:·;447.7::ойноо.;527.5:m:·;559.3::эки`;
const right = `728::жүздүүлүк:2g;838::кылуу.;900:m:¶
728:b:~ın:4;782.3:b:suyunun:4;885.3:b:suyu:4;953.3::сорпосунун;1059:mc:¶
728::сорпосу;817:m:·;845:i:(жакындыгы/тиешеси::215.5
728:i:аз);773.3:g:.;795.7:b:~;825:b:uykusu;907:m:·;912.3::уйкусу;995::сак.;1049:b:~
728:b:yürekli:1;800.3::коён:1;847::жүрөк.;909:m:¶
683:b:tavşanağzı,:1;791.7:b:-nı:1;822::күлгүн:1;891:i:(түс):1g;945.7:g:.;951:m:¶
683:b:tavşankanı,:1;796.7:b:-nı:1;831.7::1.:1;853.7::коюу:1;910.7::кызыл:1;977:i:(түс):1g;1032:g:.:1;1046::2.;1062:m:¶
728::коюу:1;780.7::демделген:1;882.7::ачуу:1;930:i:(чай):1g;981.7:g:.;985:mc:¶
683:b:tavşankulağı:1;805.3:i:бот.:2;859.7::коён:1;907.3::кулак,:1;969.3::цикламен;1056:m:¶
728:in:(Cyclamen).;831:mc:¶
683:b:tavuk,-ğu:1;776:i:зоол.:2;832::тоок:1;879.3:i:(Gallus):1g;955:g:.:1;966:b:~:1;983:b:biti:1;1019.3::тоок;1061.7:m:¶
728::бити.;787.7:b:~;811.3:b:gibi;856.7::эрте;908.3::жаткан;982.7::киши.;1050:b:~
728:b:kümesi;806.7::тооккана.;908.3::~;932.7:b:suyu;989.3::тооктун
728::сорпосу.:2;820:b:~:2;844:b:gelen:2g;905:b:yerden:2g;981:b:yumurta
728:b:esirgenmez;836.7:i:мак.;885.7::тоок;935::келчү;994.3::жерден
728::жумуртка;824::аянбас.;896.7:b:~;914.7:b:kaza;965:b:bakmış;1039:b:da
728:b:kıçını:2g;792.3:b:yırtmış:2g;870.7:i:мак.:3;930::казды:2g;997::туурап;1057.5:mc:¶
728::карганын:1;818::буту:1;863.7::сыныптыр.;964:mc:¶
683:b:tavukçu:1;767::1.:1;793::тоокчу.:1;871.3::2.:1;897::тоок:1;948::этин:1;999::саткан;1058:m:¶
728:i:(дүкөн/киши):1g;862.7:g:.;867:mc:¶
682.3:b:tavukgöğsü::109.5;806::тоок;863.7::төшү;928.3:i:(кайнатылган::132
728:i:тоок;796.3:i:төшүнө;893.3:i:күрүч;965.3:i:уну,;1024:i:сүт
728:i:кошулуп:1;811.3:i:жасалган:1;910:i:тамак):1g;986.7:g:.;992:m:¶
683:b:tavukgötü:1;780.7:i:орой:1;829::сөөл.;876:m:¶
683:b:tavukkarası;795:a:;814.7:i:мед.;860:a:;882::көздүн;947.5:a:;968.3::кароолугу;1060.3:m:¶
728:i:(жарыгы:1;819.3:i:аз:1;843.3:i:жерде:1;909:i:көрө:1;957:i:албоо):1g;1021:g:.
683:b:tavukçuluk,:1;796.7:b:ğu:1;824::тоок:1;870.3::чарбасы.;950:m:¶`;

function check(text, st) {
  if (/[nm]/.test(st)) return text;
  if (st.includes('g')) return `<span class="sq blu">${text}</span>`;
  if (st.includes('u')) return `<span class="sq">${text}</span>`;
  return text.replace(/\p{L}[\p{L}.]*(?:-\p{L}+)*/gu, m => `<span class="sq">${m}</span>`);
}
function fill(id, src, x0) {
  document.getElementById(id).innerHTML = src.split('\n').map(line => {
    const items = line.split(';').map(t => t.split(':'));
    const cells = items.map(([x, st = '', text = '', dots = '', fitW = ''], k) => {
      const next = items[k + 1];
      const cls = 'w' + (st.includes('b') ? ' bo' : '') + (st.includes('i') ? ' it' : '') +
        (st.includes('r') ? ' rd' : '') + (st.includes('m') ? ' mk' : '') +
        (st.includes('c') ? ' cut' : '') + (st.includes('s') ? ' selw' : '');
      const w = next ? ` style="width:${(next[0] - x).toFixed(1)}px"` : '';
      const body = st === 'a'
        ? '<svg width="16" height="18" viewBox="0 0 16 18"><path d="M1 9h12M8 3.500l5.500 5.500L8 14.500" fill="none" stroke="#2a8dd8" stroke-width="2.800"/></svg>'
        : check(text, st);
      const gap = dots ? `<span class="gap${dots.endsWith('g') ? ' gr' : ''}">${'·'.repeat(parseInt(dots))}</span>` : '';
      return `<span class="${cls}"${w}${fitW ? ` data-w="${fitW}"` : ''}>${body}${gap}</span>`;
    }).join('');
    return `<div class="row" style="padding-left:${(items[0][0] - x0).toFixed(1)}px">${cells}</div>`;
  }).join('');
}
fill('left', left, 212);
fill('right', right, 657);

// Labels carry their width; spread the tracking to reach it
document.querySelectorAll('[data-w]').forEach(el => {
  const w = +el.dataset.w, n = el.textContent.length;
  const r = document.createRange();
  r.selectNodeContents(el);
  const cur = r.getBoundingClientRect().width;
  el.style.letterSpacing = ((w - cur) / n).toFixed(3) + 'px';
});
```
